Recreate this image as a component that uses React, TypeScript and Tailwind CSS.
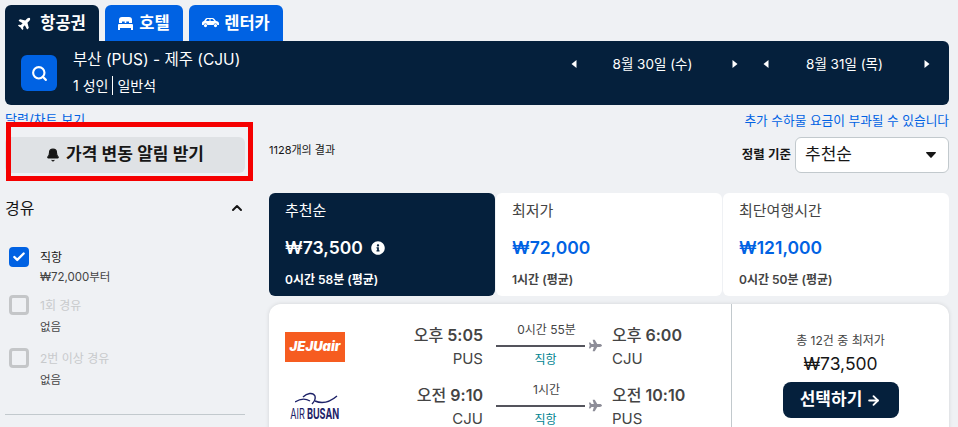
import { ArrowRight, Bell, Check, ChevronUp, Search } from "lucide-react";
import { FaInfoCircle, FaPlane } from "react-icons/fa";

const font = "font-['Inter','Noto_Sans_CJK_KR',sans-serif]";

function Caret({ dir }: { dir: "left" | "right" }) {
  return (
    <svg width="6" height="8" viewBox="0 0 6 8" className="shrink-0">
      <path d={dir === "left" ? "M5.5 0v8L0.5 4z" : "M0.5 0v8l5-4z"} fill="#fff" />
    </svg>
  );
}

function DateNav({ label, className }: { label: string; className: string }) {
  return (
    <div className={`flex items-center justify-between ${className}`}>
      <Caret dir="left" />
      <span className="-ml-1 text-[13.5px] leading-4 text-white">{label}</span>
      <Caret dir="right" />
    </div>
  );
}

function StopOption({ label, sub, checked, rowClass }: { label: string; sub: string; checked?: boolean; rowClass: string }) {
  return (
    <div className={`flex gap-3 pl-1 ${rowClass}`}>
      {checked ? (
        <div className="flex size-5 items-center justify-center rounded-[4px] bg-[#0062e3]">
          <Check size={14} strokeWidth={4} className="text-white" />
        </div>
      ) : (
        <div className="size-5 rounded-[4px] border-[3px] border-[#c4c6c8]" />
      )}
      <div className="mt-px -ml-px">
        <div className={`text-xs leading-5 ${checked ? "text-[#161616]" : "text-[#c8cacc]"}`}>{label}</div>
        <div className={`text-[11.5px] leading-4 text-[#444] ${checked ? "mt-px" : "mt-[3px]"}`}>{sub}</div>
      </div>
    </div>
  );
}

function SummaryTab({ title, price, time, active, info }: { title: string; price: string; time: string; active?: boolean; info?: boolean }) {
  return (
    <div className={`flex h-[103px] flex-1 flex-col rounded-md px-4 pt-2 ${active ? "bg-[#05203c] text-white" : "bg-white text-[#444]"}`}>
      <div className="text-[15px] leading-5">{title}</div>
      <div className={`mt-[13px] flex items-center gap-2 text-[17.5px] leading-7 font-semibold ${active ? "text-white" : "text-[#0062e3]"}`}>
        {price}
        {info && <FaInfoCircle size={14} className="text-white" />}
      </div>
      <div className="mt-[10px] text-xs leading-4 font-semibold">{time}</div>
    </div>
  );
}

function Clock({ period, time }: { period: string; time: string }) {
  return (
    <div className="text-base leading-5 font-semibold">
      <span className="font-medium">{period}</span> {time}
    </div>
  );
}

function Leg({ logo, from, fromCode, duration, to, toCode }: { logo: React.ReactNode; from: [string, string]; fromCode: string; duration: string; to: [string, string]; toCode: string }) {
  return (
    <div className="flex h-[60px] items-start text-[#444]">
      <div className="mt-[10px] flex w-[60px] justify-center">{logo}</div>
      <div className="mt-[3px] ml-[44px] w-[94px] text-right">
        <Clock period={from[0]} time={from[1]} />
        <div className="mt-[5px] text-[15px] leading-[18px]">{fromCode}</div>
      </div>
      <div className="ml-[13px] flex w-[116px] flex-col">
        <div className="w-[101px] text-center text-xs leading-4">{duration}</div>
        <div className="mt-px flex items-center">
          <div className="h-0.5 w-[89px] bg-[#54545c]" />
          <FaPlane size={13} className="ml-1 text-[#8d8d98]" />
        </div>
        <div className="-mt-0.5 w-[99px] text-center text-xs leading-5 text-[#00838f]">직항</div>
      </div>
      <div className="mt-[3px]">
        <Clock period={to[0]} time={to[1]} />
        <div className="mt-[5px] text-[15px] leading-[18px]">{toCode}</div>
      </div>
    </div>
  );
}

function JejuLogo() {
  return (
    <div className="flex h-[30px] w-[60px] items-center justify-center bg-[#f65c20] text-[13px] font-black text-white italic">
      JEJUair
    </div>
  );
}

function BusanLogo() {
  return (
    <div className="flex w-[60px] flex-col items-center">
      <svg width="44" height="13" viewBox="0 0 44 13" fill="none" stroke="#1c2167" strokeWidth="1.4" className="ml-1">
        <path d="M0 10C6 6 10 6 15 9" />
        <path d="M8 5C12 1 18 0 20 4C21 8 19 10 17 12" />
        <path d="M20 9C27 12 35 10 42 4" />
      </svg>
      <div className="mt-0.5 scale-x-[0.65] text-[14px] leading-[14px] font-bold whitespace-nowrap text-[#1c2167]">
        <span className="font-normal">AIR</span> BUSAN
      </div>
    </div>
  );
}

export default function App() {
  return (
    <div className={`relative h-[427px] w-[958px] overflow-hidden bg-[#eff1f4] pt-[5px] pr-[9px] pl-[5px] ${font}`}>
      {/* Search tabs */}
      <div className="flex gap-1.5">
        <div className="flex h-9 w-[94px] items-center justify-center gap-2 rounded-t-md bg-[#05203c] text-[16.5px] font-semibold text-white">
          <FaPlane size={14} className="-rotate-45" />
          항공권
        </div>
        <div className="flex h-9 w-[78px] items-center justify-center gap-[6px] rounded-t-md bg-[#0062e3] text-[16.5px] font-semibold text-white">
          <svg width="15" height="13" viewBox="0 0 15 13" fill="#fff">
            <path d="M4 0h7a3 3 0 0 1 3 3v3H11V4.5H8.3V6H6.7V4.5H4V6H1V3a3 3 0 0 1 3-3zM1 7h13a1 1 0 0 1 1 1v5h-2v-2H2v2H0V8a1 1 0 0 1 1-1z" />
          </svg>
          호텔
        </div>
        <div className="flex h-9 w-[94px] items-center justify-center gap-[5px] rounded-t-md bg-[#0062e3] text-[16.5px] font-semibold text-white">
          <svg width="17" height="10" viewBox="0 0 17 10" fill="#fff">
            <path d="M5 0h5.5c.7 0 1.2.3 1.7.8L14 3c1.6.2 3 .9 3 2.4V7h-1.6a2 2 0 0 0-3.8 0H5.4a2 2 0 0 0-3.8 0H0V5c0-1 .8-1.7 2-2l1.5-2.2C3.9.3 4.4 0 5 0zm.2 1L4 3h3.5V1zm3.3 0v2h3.8l-1.4-1.6c-.3-.3-.5-.4-.9-.4zM3.5 6a1.6 1.6 0 1 1 0 3.2 1.6 1.6 0 0 1 0-3.2zm10 0a1.6 1.6 0 1 1 0 3.2 1.6 1.6 0 0 1 0-3.2z" />
          </svg>
          렌터카
        </div>
      </div>

      {/* Summary bar */}
      <div className="flex h-16 justify-between rounded-r-md rounded-bl-md bg-[#05203c] pt-[9px] pr-[19px] pl-4">
        <div className="flex">
          <div className="mt-[5px] flex size-9 items-center justify-center rounded-md bg-[#0062e3]">
            <Search size={17} strokeWidth={3} className="text-white" />
          </div>
          <div className="ml-4 text-white">
            <div className="text-[15.5px] leading-5">부산 (PUS) - 제주 (CJU)</div>
            <div className="mt-1.5 flex items-center text-sm leading-4">
              1 성인
              <span className="mx-1 h-[19px] w-px bg-white" />
              일반석
            </div>
          </div>
        </div>
        <div className="mt-[6px] flex h-4 items-center gap-[25px]">
          <DateNav label="8월 30일 (수)" className="w-[167px]" />
          <DateNav label="8월 31일 (목)" className="w-[167px]" />
        </div>
      </div>

      {/* Results area */}
      <div className="flex">
        <aside className="w-[240px] shrink-0">
          <div className="mt-[5px] h-[18px] text-[13px] leading-[18px] text-[#0062e3]">달력/차트 보기</div>
          <div className="mt-[9px] flex h-9 items-center justify-center gap-1.5 rounded-md bg-[#dfe2e5] text-[17px] font-semibold text-[#161616]">
            <Bell size={14} className="fill-[#161616]" />
            가격 변동 알림 받기
          </div>
          <div className="mt-[25px] flex items-center justify-between text-[#161616]">
            <span className="text-base leading-5">경유</span>
            <ChevronUp size={16} strokeWidth={3} />
          </div>
          <div className="mt-[29px]">
            <StopOption label="직항" sub="₩72,000부터" checked rowClass="h-[48px]" />
            <StopOption label="1회 경유" sub="없음" rowClass="h-[53px]" />
            <StopOption label="2번 이상 경유" sub="없음" rowClass="h-[53px]" />
          </div>
          <div className="mt-[13px] h-px bg-[#c2c9cd]" />
        </aside>

        <main className="ml-6 flex-1">
          <div className="mt-[7px] h-[18px] text-right text-[12.7px] leading-[18px] text-[#0062e3]">추가 수하물 요금이 부과될 수 있습니다</div>
          <div className="mt-[7px] flex items-center justify-between">
            <div className="-mt-[9px] text-[11px] text-[#161616]">1128개의 결과</div>
            <div className="flex items-center gap-1">
              <span className="text-[12.5px] font-semibold text-[#161616]">정렬 기준</span>
              <div className="flex h-9 w-[154px] items-center justify-between rounded-md border border-[#c2c9cd] bg-white pr-[12px] pl-[9px] text-[17px] text-[#161616]">
                추천순
                <svg width="10" height="6" viewBox="0 0 10 6">
                  <path d="M0.6 0h8.8c.5 0 .7.5.4.9L5.6 5.6c-.3.4-.9.4-1.2 0L.2.9C-.1.5.1 0 .6 0z" fill="#161616" />
                </svg>
              </div>
            </div>
          </div>

          <div className="mt-[20px] flex gap-px">
            <SummaryTab title="추천순" price="₩73,500" time="0시간 58분 (평균)" active info />
            <SummaryTab title="최저가" price="₩72,000" time="1시간 (평균)" />
            <SummaryTab title="최단여행시간" price="₩121,000" time="0시간 50분 (평균)" />
          </div>

          <div className="mt-2 flex h-[140px] rounded-t-xl bg-white shadow-[0_0_4px_rgba(0,0,0,0.12)]">
            <div className="w-[462px] pt-[18px] pl-4">
              <Leg logo={<JejuLogo />} from={["오후", "5:05"]} fromCode="PUS" duration="0시간 55분" to={["오후", "6:00"]} toCode="CJU" />
              <Leg logo={<BusanLogo />} from={["오전", "9:10"]} fromCode="CJU" duration="1시간" to={["오전", "10:10"]} toCode="PUS" />
            </div>
            <div className="flex flex-1 flex-col items-center border-l border-[#c2c9cd] pt-[29px]">
              <div className="text-xs leading-4 text-[#444]">총 12건 중 최저가</div>
              <div className="mt-[3px] text-[17.5px] leading-6 text-[#161616]">₩73,500</div>
              <div className="mt-[6px] flex h-9 w-[116px] items-center justify-center gap-1 rounded-lg bg-[#05203c] text-[17px] font-semibold text-white">
                선택하기
                <ArrowRight size={15} strokeWidth={3} />
              </div>
            </div>
          </div>
        </main>
      </div>

      {/* Red annotation box */}
      <div className="absolute top-[122px] left-[6px] h-[59px] w-[247px] border-[5px] border-[#f50000]" />
    </div>
  );
}
